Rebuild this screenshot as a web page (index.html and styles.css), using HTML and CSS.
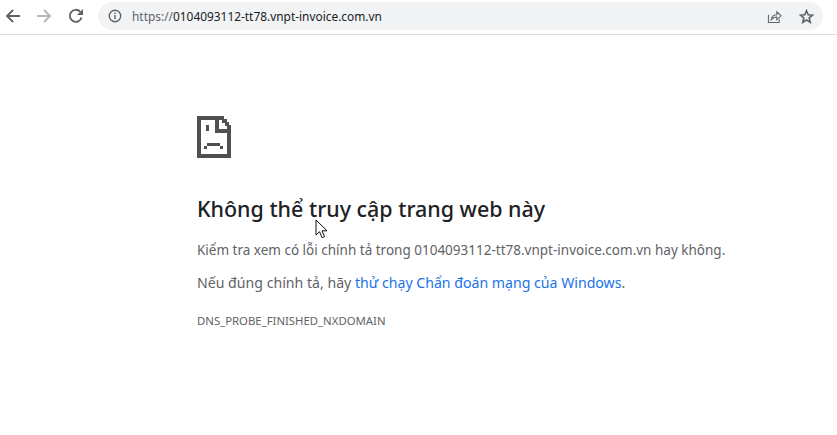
FILE: index.html
```html
<!DOCTYPE html>
<html lang="vi">
<head>
<meta charset="utf-8">
<title>0104093112-tt78.vnpt-invoice.com.vn</title>
<link rel="stylesheet" href="styles.css">
</head>
<body>
<header class="toolbar">
  <svg class="nav-icon back" viewBox="0 0 16 16"><path d="M15 8H2.500M8 2L2 8l6 6" /></svg>
  <svg class="nav-icon forward" viewBox="0 0 16 16"><path d="M1 8h12.500M8 2l6 6-6 6" /></svg>
  <svg class="nav-icon reload" viewBox="0 0 16 16"><path d="M13.600 9.500A6 6 0 1 1 12.200 3.700" /><path class="solid" d="M15 1v6H9z" /></svg>
  <div class="omnibox">
    <svg class="info" viewBox="0 0 14 14"><circle cx="7" cy="7" r="5.700" /><path d="M7 6v4.200M7 3.600v1.400" /></svg>
    <div class="url"><span class="scheme">https://</span>0104093112-tt78.vnpt-invoice.com.vn</div>
    <svg class="share" viewBox="0 0 16 16"><path d="M1.500 6v8.500h11.500V11M4.500 11.500c.4-3.600 3-5.400 6-5.400V3l4.500 4.300-4.500 4.200V8.600c-2.500 0-4.500.8-6 2.900z" /></svg>
    <svg class="star" viewBox="0 0 16 16"><path d="M8 1.800l1.800 4.300 4.700.4-3.600 3 1.100 4.600L8 11.700l-4 2.400 1.100-4.600-3.600-3 4.700-.4z" /></svg>
  </div>
</header>
<main class="error-page">
  <svg class="sad-page" viewBox="0 0 34 42" shape-rendering="crispEdges"><path fill-rule="evenodd" d="M0 0h27v3h3v3h2v3h2v33H0zM4 4v34h26V17H18V4zM22 4v9h8v-3h-2V7h-3V4z" /><path d="M9 9h3v6H9zM10 27h13v3H10zM7 30h3v3H7zM23 30h3v3h-3z" /></svg>
  <h1 class="title">Không thể truy cập trang web này</h1>
  <p class="hint">Kiểm tra xem có lỗi chính tả trong 0104093112-tt78.vnpt-invoice.com.vn hay không.</p>
  <p class="suggest">Nếu đúng chính tả, hãy <a class="diag" href="#">thử chạy Chẩn đoán mạng của Windows</a>.</p>
  <p class="code">DNS_PROBE_FINISHED_NXDOMAIN</p>
</main>
<svg class="cursor" viewBox="0 0 14 20"><path d="M1 1v15l3.500-3.300 2.600 6 2.500-1-2.600-5.900h5z" /></svg>
</body>
</html>
```
FILE: styles.css
```css
html, body { margin: 0; height: 100%; background: #fff; overflow: hidden; }
body { font-family: "Noto Sans", "Open Sans", sans-serif; color: #202124; position: relative; }

.toolbar { display: flex; align-items: center; height: 32px; padding: 0 0 2px 5px; border-bottom: 1px solid #dadce0; }
.nav-icon { width: 16px; height: 16px; fill: none; stroke: #5f6368; stroke-width: 1.9; flex: none; }
.forward { margin-left: 15px; stroke: #b4b7bb; }
.reload { margin-left: 16px; }
.reload .solid { fill: #5f6368; stroke: none; }
.omnibox { display: flex; align-items: center; flex: 1; height: 28px; margin: 0 14px 0 14px; padding: 0 9px 0 10px; border-radius: 14px; background: #f1f3f4; }
.info { width: 14px; height: 14px; fill: none; stroke: #5f6368; stroke-width: 1.4; flex: none; }
.url { flex: 1; margin-left: 10px; font-size: 11.900px; color: #202124; }
.scheme { color: #5f6368; }
.share { width: 15px; height: 15px; fill: none; stroke: #5f6368; stroke-width: 1.1; }
.star { width: 15px; height: 15px; margin-left: 17px; fill: none; stroke: #5f6368; stroke-width: 1.7; }

.error-page { padding: 81px 0 0 197px; }
.sad-page { display: block; width: 34px; height: 42px; fill: #505050; }
.title { margin: 37px 0 0; font-size: 21.450px; line-height: 28px; font-weight: 500; color: #202124; }
.hint { margin: 17px 0 0; font-size: 13.500px; line-height: 20px; color: #5f6368; }
.suggest { margin: 13px 0 0; font-size: 14.130px; line-height: 20px; color: #5f6368; }
.diag { color: #1a73e8; text-decoration: none; }
.code { margin: 20px 0 0; font-size: 11.350px; line-height: 16px; color: #5f6368; }

.cursor { position: absolute; left: 315px; top: 219px; width: 14px; height: 20px; fill: #fff; stroke: #111; stroke-width: 1; }
```
